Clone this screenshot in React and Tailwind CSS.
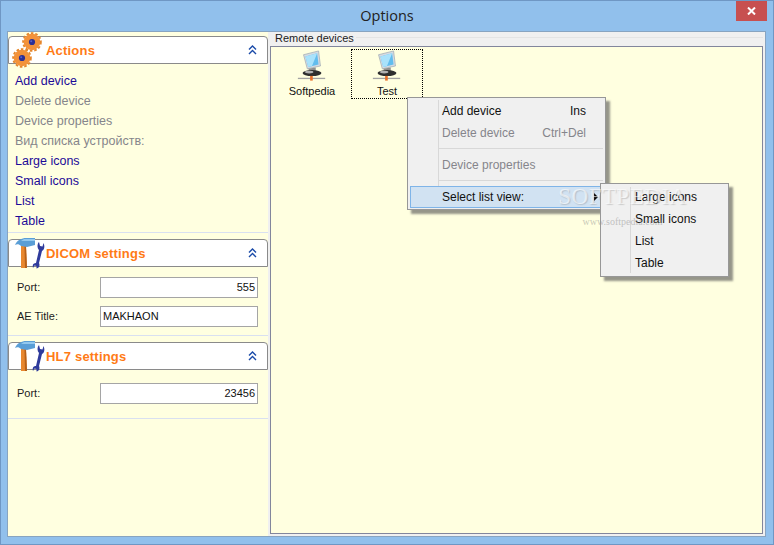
import { useState } from 'react';

const Gear = ({ cx, cy }) => (
  <g>
    <circle cx={cx} cy={cy} r="8.3" fill="#f3923a" />
    <circle cx={cx} cy={cy} r="8.9" fill="none" stroke="#e5872c" strokeWidth="1.8" strokeDasharray="2.6 1.9" />
    <circle cx={cx} cy={cy} r="3.1" fill="#2b2f96" />
    <circle cx={cx - 0.8} cy={cy - 0.8} r="1" fill="#5a62c8" />
  </g>
);

const GearIcon = () => (
  <svg className="absolute left-[1px] top-[-7px] w-[36px] h-[40px]" viewBox="0 0 36 40">
    <Gear cx={22} cy={12} />
    <Gear cx={12} cy={28} />
  </svg>
);

const ToolsIcon = () => (
  <svg className="absolute left-[5px] top-[-2px] w-[32px] h-[31px]" viewBox="0 0 32 31">
    <path d="M7 8 L12 8 L13 30 L7 30 Z" fill="#e8872e" />
    <path d="M10.5 8 L12 8 L13 30 L11 30 Z" fill="#b5601a" />
    <path d="M1 7 C3 2 8 0 12 0 L21 0 L21 7 L13 9 L7 8 C5 6 3 6 1 7 Z" fill="#5a9ed6" />
    <path d="M10 1 L21 1 L21 3 L7 3 Z" fill="#93c8ee" />
    <path d="M25 4 C23 6 23 10 25 12 L22 25 C20 25 18 26 19 30 L20.5 27.5 L22.5 28 L22.5 30.5 C25.5 30 26 27 25 25 L28 13 C30.5 12 31 8 29.5 5 L28.5 8.5 L26 8 Z" fill="#2f3b9c" />
  </svg>
);

const MonitorIcon = () => (
  <svg className="w-[30px] h-[34px]" viewBox="0 0 30 34">
    <path d="M6 5 L22 1 L24 17 L10 20 Z" fill="#d5dbe2" stroke="#8b97a5" strokeWidth="0.6" />
    <path d="M8 7 L20.5 3.5 L22 15.5 L11 18 Z" fill="#62bdee" />
    <path d="M8 7 L20.5 3.5 L15 17 L11 18 Z" fill="#a9e2fb" />
    <path d="M11 20 L19 18.5 L19 22 L12 22 Z" fill="#8f8f8f" />
    <ellipse cx="15" cy="24.5" rx="10" ry="3.2" fill="#2e2e2e" />
    <ellipse cx="12" cy="23.5" rx="4.5" ry="1.5" fill="#b0b0b0" />
    <rect x="0" y="29.5" width="29" height="1.4" fill="#a3a3a3" />
    <rect x="13" y="27.5" width="2.8" height="5" fill="#e8702a" />
  </svg>
);

const Chevrons = () => (
  <svg className="w-[9px] h-[10px]" viewBox="0 0 9 10" fill="none" stroke="#1a4aa8" strokeWidth="1.4">
    <path d="M1 4.5 L4.5 1 L8 4.5" />
    <path d="M1 9 L4.5 5.5 L8 9" />
  </svg>
);

const PanelHeader = ({ icon, title }) => (
  <div className="relative h-[28px] bg-white border border-[#8a8a8a] rounded-t-[4px] flex items-center justify-between pl-[37px] pr-[10px]">
    {icon}
    <span className="relative pt-[1px] text-[13px] font-bold text-[#ff7b16] tracking-[0.2px]">{title}</span>
    <Chevrons />
  </div>
);

const Field = ({ label, value, right }) => (
  <div className="flex items-center h-[21px] pl-[9px] pr-[10px]">
    <span className="w-[83px] text-[11px] text-[#1c1c1c]">{label}</span>
    <div className={`flex-1 h-[21px] bg-white border border-[#a5a5a5] flex items-center px-[2px] text-[11px] text-[#111] ${right ? 'justify-end' : ''}`}>
      {value}
    </div>
  </div>
);

const actions = [
  { label: 'Add device', on: true },
  { label: 'Delete device' },
  { label: 'Device properties' },
  { label: 'Вид списка устройств:' },
  { label: 'Large icons', on: true },
  { label: 'Small icons', on: true },
  { label: 'List', on: true },
  { label: 'Table', on: true },
];

const App = () => {
  const [selected] = useState('Test');

  return (
    <div className="relative w-[774px] h-[545px] overflow-hidden flex flex-col bg-[#91c0ec] border border-[#6f97c4] font-['Liberation_Sans',sans-serif]">
      {/* Title bar */}
      <div className="relative h-[30px] shrink-0 flex items-center justify-center">
        <span className="text-[14.5px] text-[#222] font-['Open_Sans',sans-serif]">Options</span>
        <div className="absolute right-[6px] top-0 w-[31px] h-[20px] bg-[#c75050] flex items-center justify-center">
          <svg className="w-[9px] h-[8px]" viewBox="0 0 9 8" stroke="white" strokeWidth="2" fill="none">
            <path d="M1 0.5 L8 7.5 M8 0.5 L1 7.5" />
          </svg>
        </div>
      </div>

      <div className="flex h-[506px] ml-[6px] mr-[7px] border border-[#88a4c0]">
        {/* Left column */}
        <div className="w-[260px] shrink-0 bg-[#ffffe0] flex flex-col pt-[4px]">
          <PanelHeader icon={<GearIcon />} title="Actions" />
          <div className="h-[169px] border-b border-[#d9e0f0] pt-[7px] pl-[7px] flex flex-col">
            {actions.map((a) => (
              <div key={a.label} className={`h-[20px] flex items-center text-[12.5px] ${a.on ? 'text-[#1c0a98]' : 'text-[#85858b]'}`}>
                {a.label}
              </div>
            ))}
          </div>
          <div className="mt-[6px]">
            <PanelHeader icon={<ToolsIcon />} title="DICOM settings" />
          </div>
          <div className="h-[69px] border-b border-[#d9e0f0] pt-[10px] flex flex-col gap-[8px]">
            <Field label="Port:" value="555" right />
            <Field label="AE Title:" value="MAKHAON" />
          </div>
          <div className="mt-[6px]">
            <PanelHeader icon={<ToolsIcon />} title="HL7 settings" />
          </div>
          <div className="h-[49px] border-b border-[#d9e0f0] pt-[13px]">
            <Field label="Port:" value="23456" right />
          </div>
        </div>

        {/* Right column */}
        <div className="flex-1 flex flex-col bg-[#f0f0f0] px-[2px] pb-[2px]">
          <div className="h-[14px] shrink-0 flex pl-[5px] text-[11px] text-[#1c1c1c] leading-[13px]">
            <span>Remote devices</span>
            <span className="flex-1 h-px mt-[5px] ml-[2px] bg-[#e4e4e4]" />
          </div>
          <div className="flex-1 bg-[#ffffe0] border border-[#82869c] flex items-start pl-[5px] pt-[2px] gap-[3px]">
            {['Softpedia', 'Test'].map((name) => (
              <div
                key={name}
                className={`w-[72px] h-[50px] flex flex-col items-center text-[11px] text-[#111] ${selected === name ? 'border border-dotted border-black' : 'border border-transparent'}`}
              >
                <MonitorIcon />
                <span className="mt-[2px] leading-[14px]">{name}</span>
              </div>
            ))}
          </div>
        </div>
      </div>

      {/* Context menu */}
      <div className="absolute left-[406px] top-[96px] w-[199px] h-[113px] bg-[#f0f0f0] border border-[#979797] shadow-[4px_4px_2px_rgba(80,80,80,0.6)] flex flex-col px-[2px] text-[12px] text-[#111]">
        <div className="absolute left-[30px] top-[2px] bottom-[2px] w-px bg-[#d8d8d8]" />
        <div className="h-[22px] mt-[2px] flex items-center justify-between pl-[32px] pr-[17px]">
          <span>Add device</span><span>Ins</span>
        </div>
        <div className="h-[22px] flex items-center justify-between pl-[32px] pr-[17px] text-[#85858b]">
          <span>Delete device</span><span>Ctrl+Del</span>
        </div>
        <div className="h-px bg-[#d8d8d8] mt-[4px] ml-[28px]" />
        <div className="h-[31px] pt-[1px] flex items-center pl-[32px] text-[#85858b]">Device properties</div>
        <div className="h-px bg-[#d8d8d8] ml-[28px]" />
        <div className="relative h-[22px] mt-[5px] bg-[#d1e2f2] border border-[#7fb4e8] flex items-center justify-between pl-[31px] pr-[4px]">
          <span>Select list view:</span>
          <span className="w-0 h-0 border-y-[4px] border-y-transparent border-l-[4px] border-l-black" />
        </div>
      </div>

      {/* Submenu */}
      <div className="absolute left-[599px] top-[182px] w-[129px] h-[94px] bg-[#f0f0f0] border border-[#979797] shadow-[4px_4px_2px_rgba(80,80,80,0.6)] flex flex-col pt-[2px] text-[12px] text-[#111]">
        <div className="absolute left-[29px] top-[3px] bottom-[3px] w-px bg-[#d8d8d8]" />
        {['Large icons', 'Small icons', 'List', 'Table'].map((item) => (
          <div key={item} className="h-[22px] flex items-center pl-[34px]">{item}</div>
        ))}
      </div>

      {/* Watermark */}
      <div className="absolute left-[558px] top-[183px] w-[127px] pointer-events-none flex flex-col items-center font-['Liberation_Serif',serif]">
        <span className="text-[23px] leading-[26px] tracking-[0.5px] text-white/60 [text-shadow:1px_1px_1px_rgba(120,120,120,0.3)]">SOFTPEDIA</span>
        <span className="text-[10px] leading-[12px] mt-[6px] text-[#8f8f8f]/50">www.softpedia.com</span>
      </div>
    </div>
  );
};

export default App;
